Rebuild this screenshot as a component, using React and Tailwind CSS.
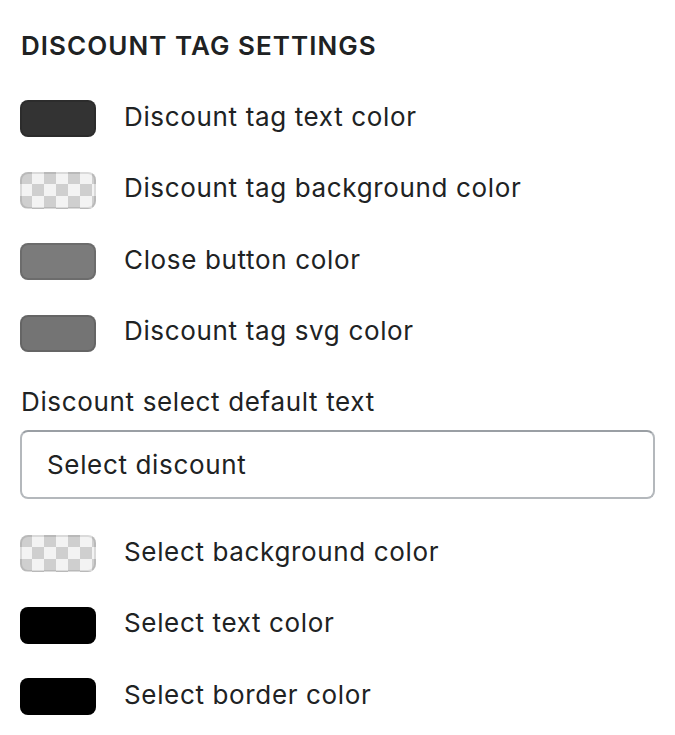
import React from "react";

const checker =
  "bg-[conic-gradient(#f3f3f3_25%,#cfcfcf_0_50%,#f3f3f3_0_75%,#cfcfcf_0)] bg-[length:24px_24px]";

function Swatch({ kind }) {
  if (kind === "checker") {
    return (
      <div
        className={`w-[76px] h-[37px] rounded-[8px] shrink-0 ${checker} shadow-[inset_0_0_0_2px_rgba(0,0,0,0.1)]`}
      />
    );
  }
  const colors = {
    dark: "bg-[#333333]",
    gray: "bg-[#7b7b7b]",
    gray2: "bg-[#747474]",
    black: "bg-[#000000]",
  };
  return (
    <div
      className={`w-[76px] h-[37px] rounded-[8px] shrink-0 ${colors[kind]} shadow-[inset_0_0_0_2px_rgba(0,0,0,0.12)]`}
    />
  );
}

function Row({ kind, label }) {
  return (
    <div className="flex items-center gap-[28px]">
      <Swatch kind={kind} />
      <span className="text-[26px] leading-[32px] tracking-[0.65px] text-[#202223] -mt-[4px]">
        {label}
      </span>
    </div>
  );
}

export default function App() {
  return (
    <div
      className="w-[675px] h-[735px] bg-white px-[20px] overflow-hidden"
      style={{ fontFamily: "Inter, 'Noto Sans', sans-serif" }}
    >
      <h2 className="pt-[30px] text-[26px] leading-[32px] font-semibold uppercase tracking-[1.05px] text-[#202223] pl-[1px]">
        Discount tag settings
      </h2>
      <div className="mt-[38px] flex flex-col gap-[34.5px]">
        <Row kind="dark" label="Discount tag text color" />
        <Row kind="checker" label="Discount tag background color" />
        <Row kind="gray" label="Close button color" />
        <Row kind="gray2" label="Discount tag svg color" />
      </div>
      <div className="mt-[34px] text-[26px] leading-[32px] tracking-[0.65px] text-[#202223] pl-[1px]">
        Discount select default text
      </div>
      <div className="mt-[12.5px] h-[69px] w-[635px] rounded-[8px] border-2 border-[#b4b8bc] border-t-[#9a9fa4] flex items-center pl-[25px] text-[26px] tracking-[0.65px] text-[#202223]">
        Select discount
      </div>
      <div className="mt-[36px] flex flex-col gap-[34.5px]">
        <Row kind="checker" label="Select background color" />
        <Row kind="black" label="Select text color" />
        <Row kind="black" label="Select border color" />
      </div>
    </div>
  );
}
